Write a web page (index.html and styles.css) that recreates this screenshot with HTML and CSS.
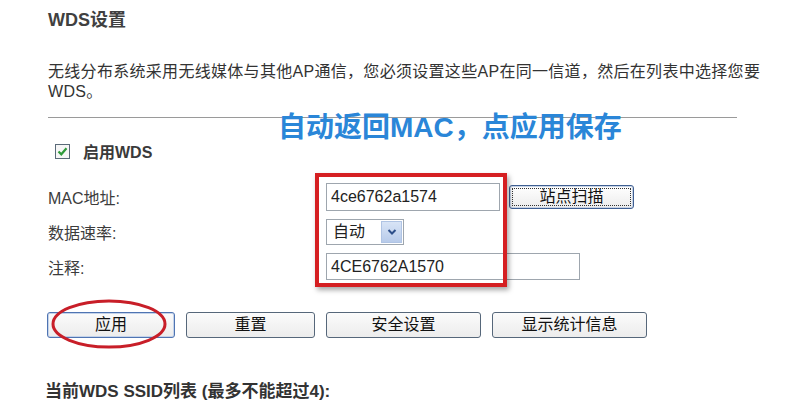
FILE: index.html
```html
<!DOCTYPE html>
<html lang="zh-CN">
<head>
<meta charset="utf-8">
<title>WDS设置</title>
<link rel="stylesheet" href="styles.css">
</head>
<body>
<div class="page">
  <h1 class="title">WDS设置</h1>
  <p class="desc">无线分布系统采用无线媒体与其他AP通信，您必须设置这些AP在同一信道，然后在列表中选择您要WDS。</p>
  <div class="rule"></div>
  <div class="enable-row">
    <span class="checkbox">
      <svg width="11" height="11" viewBox="0 0 11 11"><path d="M1.5 5.5 L4.3 8.3 L9.5 2.2" fill="none" stroke="#2e9a3a" stroke-width="2.2"/></svg>
    </span>
    <span class="enable-label">启用WDS</span>
  </div>
  <div class="form">
    <label class="lbl">MAC地址:</label>
    <div class="ctrl">
      <div class="input w174">4ce6762a1574</div>
      <div class="scan-btn"><span class="focus">站点扫描</span></div>
    </div>
    <label class="lbl">数据速率:</label>
    <div class="ctrl">
      <div class="select">
        <span class="select-text">自动</span>
        <span class="select-arrow">
          <svg width="10" height="8" viewBox="0 0 10 8"><path d="M1.5 2 L5 5.5 L8.5 2" fill="none" stroke="#2d4f8a" stroke-width="2"/></svg>
        </span>
      </div>
    </div>
    <label class="lbl">注释:</label>
    <div class="ctrl">
      <div class="input w254">4CE6762A1570</div>
    </div>
  </div>
  <div class="buttons">
    <div class="btn btn-primary">应用</div>
    <div class="btn">重置</div>
    <div class="btn wide">安全设置</div>
    <div class="btn wide">显示统计信息</div>
  </div>
  <div class="list-title">当前WDS SSID列表 (最多不能超过4):</div>

  <div class="note">自动返回MAC，点应用保存</div>
  <div class="red-box"></div>
  <svg class="ellipse" width="124" height="56" viewBox="0 0 124 56"><ellipse cx="62" cy="28" rx="56" ry="23" fill="none" stroke="#c81e28" stroke-width="3"/></svg>
</div>
</body>
</html>
```

FILE: styles.css
```css
html, body {
  margin: 0;
  padding: 0;
  background: #ffffff;
}
.page {
  position: relative;
  width: 791px;
  height: 400px;
  overflow: hidden;
  padding: 9px 0 0 48px;
  box-sizing: border-box;
  font-family: "Liberation Sans", "Noto Sans CJK SC", sans-serif;
  color: #333333;
}
.title {
  margin: 0;
  font-size: 18px;
  line-height: 22px;
  font-weight: bold;
  color: #404040;
}
.desc {
  margin: 31px 0 0 0;
  width: 743px;
  font-size: 16px;
  letter-spacing: 0.3px;
  line-height: 20px;
  color: #333333;
}
.rule {
  margin-top: 15px;
  width: 689px;
  height: 0;
  border-top: 1px solid #9a9a9a;
}
.enable-row {
  margin-top: 23px;
  display: flex;
  align-items: center;
  height: 20px;
  padding-left: 7px;
}
.checkbox {
  width: 13px;
  height: 13px;
  border: 1px solid #5a6a78;
  background: #f6f6f6;
  display: flex;
  align-items: center;
  justify-content: center;
}
.enable-label {
  margin-left: 13px;
  font-size: 16px;
  font-weight: bold;
  color: #3a3a3a;
}
.form {
  margin-top: 22px;
  display: grid;
  grid-template-columns: 278px auto;
  row-gap: 8px;
  align-items: center;
}
.lbl {
  font-size: 16px;
  color: #3c3c3c;
}
.ctrl {
  display: flex;
  align-items: center;
  gap: 9px;
}
.input {
  height: 28px;
  box-sizing: border-box;
  border: 1px solid #9ea6ae;
  background: #fff;
  font-size: 16px;
  line-height: 26px;
  padding-left: 4px;
  color: #222;
}
.w174 { width: 174px; }
.w254 { width: 254px; height: 27px; line-height: 25px; }
.scan-btn {
  width: 125px;
  height: 24px;
  box-sizing: border-box;
  border: 1px solid #3f5f92;
  border-radius: 3px;
  background: linear-gradient(#ffffff, #ececec);
  padding: 2px;
  box-shadow: inset 0 0 0 1px #c8d4e6;
}
.scan-btn .focus {
  display: block;
  height: 100%;
  box-sizing: border-box;
  border: 1px dotted #333;
  text-align: center;
  font-size: 16px;
  line-height: 15px;
  color: #111;
}
.select {
  width: 78px;
  height: 26px;
  box-sizing: border-box;
  border: 1px solid #9ea6ae;
  display: flex;
  align-items: stretch;
  background: #fff;
}
.select-text {
  flex: 1;
  font-size: 16px;
  line-height: 24px;
  padding-left: 6px;
  color: #222;
}
.select-arrow {
  width: 19px;
  margin: 1px;
  background: linear-gradient(#d8e4f6, #b8cbea);
  border: 1px solid #b0c4e4;
  display: flex;
  align-items: center;
  justify-content: center;
}
.buttons {
  margin-top: 32px;
  display: flex;
  gap: 11px;
  margin-left: -1px;
}
.btn {
  width: 129px;
  height: 26px;
  box-sizing: border-box;
  border: 1px solid #56677a;
  border-radius: 3px;
  background: linear-gradient(#fbfbfb, #ececec);
  text-align: center;
  font-size: 16px;
  line-height: 23px;
  color: #111;
}
.btn.wide { width: 155px; }
.btn-primary {
  width: 128px;
  border-color: #4f74b2;
  box-shadow: inset 0 0 0 1px #c4d3ea;
}
.list-title {
  margin-top: 45px;
  margin-left: -3px;
  font-size: 17px;
  font-weight: bold;
  color: #333;
  line-height: 18px;
}
.note {
  position: absolute;
  left: 278px;
  top: 113px;
  font-size: 28px;
  line-height: 30px;
  font-weight: bold;
  color: #2a86d8;
  white-space: nowrap;
}
.red-box {
  position: absolute;
  left: 315px;
  top: 173px;
  width: 192px;
  height: 114px;
  box-sizing: border-box;
  border: 4px solid #d51f22;
  box-shadow: 2px 3px 5px rgba(0, 0, 0, 0.35);
}
.ellipse {
  position: absolute;
  left: 47px;
  top: 296px;
}
```
